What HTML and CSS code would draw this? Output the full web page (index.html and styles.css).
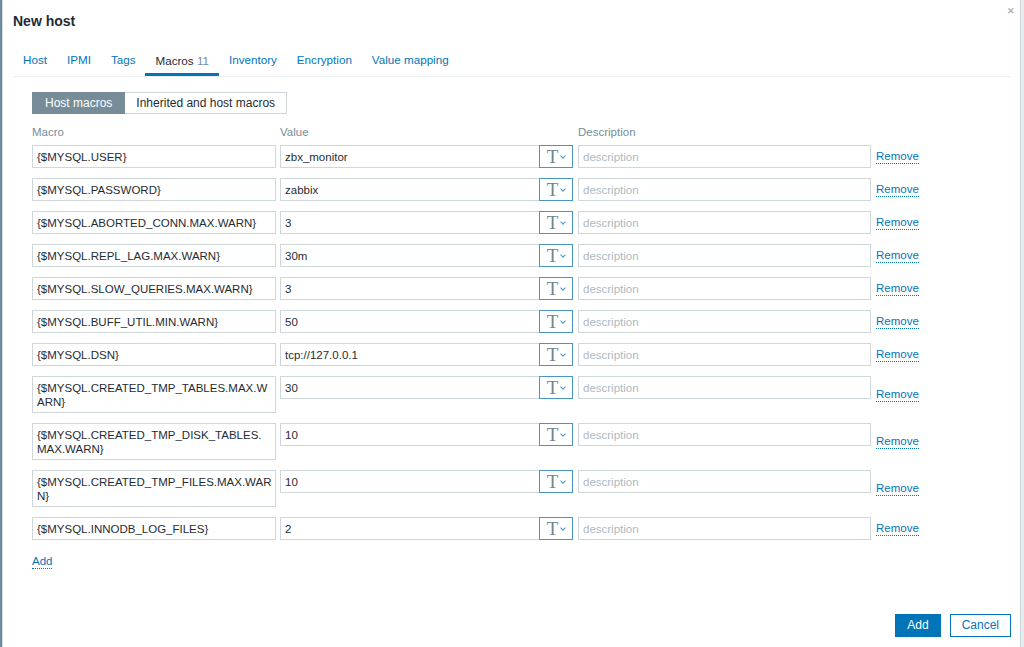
FILE: index.html
```html
<!DOCTYPE html>
<html>
<head>
<meta charset="utf-8">
<link rel="stylesheet" href="styles.css">
</head>
<body>
<div class="backdrop-left"></div>
<div class="dialog">
  <div class="head">
    <h4 class="title">New host</h4>
    <span class="close">&#x2715;</span>
  </div>
  <ul class="tabs">
    <li class="tab"><a>Host</a></li>
    <li class="tab"><a>IPMI</a></li>
    <li class="tab"><a>Tags</a></li>
    <li class="tab active"><a>Macros <span class="count">11</span></a></li>
    <li class="tab"><a>Inventory</a></li>
    <li class="tab"><a>Encryption</a></li>
    <li class="tab"><a>Value mapping</a></li>
  </ul>
  <div class="content">
    <div class="segmented">
      <span class="seg on">Host macros</span><span class="seg">Inherited and host macros</span>
    </div>
    <div class="grid">
      <div class="th">Macro</div><div class="th">Value</div><div class="th">Description</div><div class="th"></div>

      <div class="field macro">{$MYSQL.USER}</div>
      <div class="val"><div class="field vinput">zbx_monitor</div><span class="tbtn"><span class="t">T</span><span class="chev"></span></span></div>
      <div class="field desc">description</div>
      <a class="remove">Remove</a>

      <div class="field macro">{$MYSQL.PASSWORD}</div>
      <div class="val"><div class="field vinput">zabbix</div><span class="tbtn"><span class="t">T</span><span class="chev"></span></span></div>
      <div class="field desc">description</div>
      <a class="remove">Remove</a>

      <div class="field macro">{$MYSQL.ABORTED_CONN.MAX.WARN}</div>
      <div class="val"><div class="field vinput">3</div><span class="tbtn"><span class="t">T</span><span class="chev"></span></span></div>
      <div class="field desc">description</div>
      <a class="remove">Remove</a>

      <div class="field macro">{$MYSQL.REPL_LAG.MAX.WARN}</div>
      <div class="val"><div class="field vinput">30m</div><span class="tbtn"><span class="t">T</span><span class="chev"></span></span></div>
      <div class="field desc">description</div>
      <a class="remove">Remove</a>

      <div class="field macro">{$MYSQL.SLOW_QUERIES.MAX.WARN}</div>
      <div class="val"><div class="field vinput">3</div><span class="tbtn"><span class="t">T</span><span class="chev"></span></span></div>
      <div class="field desc">description</div>
      <a class="remove">Remove</a>

      <div class="field macro">{$MYSQL.BUFF_UTIL.MIN.WARN}</div>
      <div class="val"><div class="field vinput">50</div><span class="tbtn"><span class="t">T</span><span class="chev"></span></span></div>
      <div class="field desc">description</div>
      <a class="remove">Remove</a>

      <div class="field macro">{$MYSQL.DSN}</div>
      <div class="val"><div class="field vinput">tcp://127.0.0.1</div><span class="tbtn"><span class="t">T</span><span class="chev"></span></span></div>
      <div class="field desc">description</div>
      <a class="remove">Remove</a>

      <div class="field macro tall">{$MYSQL.CREATED_TMP_TABLES.MAX.W<br>ARN}</div>
      <div class="val"><div class="field vinput">30</div><span class="tbtn"><span class="t">T</span><span class="chev"></span></span></div>
      <div class="field desc">description</div>
      <a class="remove">Remove</a>

      <div class="field macro tall">{$MYSQL.CREATED_TMP_DISK_TABLES.<br>MAX.WARN}</div>
      <div class="val"><div class="field vinput">10</div><span class="tbtn"><span class="t">T</span><span class="chev"></span></span></div>
      <div class="field desc">description</div>
      <a class="remove">Remove</a>

      <div class="field macro tall">{$MYSQL.CREATED_TMP_FILES.MAX.WAR<br>N}</div>
      <div class="val"><div class="field vinput">10</div><span class="tbtn"><span class="t">T</span><span class="chev"></span></span></div>
      <div class="field desc">description</div>
      <a class="remove">Remove</a>

      <div class="field macro">{$MYSQL.INNODB_LOG_FILES}</div>
      <div class="val"><div class="field vinput">2</div><span class="tbtn"><span class="t">T</span><span class="chev"></span></span></div>
      <div class="field desc">description</div>
      <a class="remove">Remove</a>
    </div>
    <a class="addlink">Add</a>
  </div>
  <div class="footer">
    <span class="btn primary">Add</span>
    <span class="btn secondary">Cancel</span>
  </div>
</div>
<div class="backdrop-right"></div>
</body>
</html>
```

FILE: styles.css
```css
html, body {
  margin: 0;
  padding: 0;
}
body {
  width: 1024px;
  height: 647px;
  overflow: hidden;
  display: flex;
  font-family: "Liberation Sans", Arial, sans-serif;
  font-size: 11.5px;
  color: #1f2c33;
  background: #eef2f4;
}
.backdrop-left {
  width: 2px;
  flex: none;
  background: #6d8ba0;
}
.backdrop-right {
  flex: 1;
  background: #e6ebee;
  border-left: 1px solid #cfd6da;
}
.dialog {
  width: 1018px;
  height: 647px;
  flex: none;
  box-sizing: border-box;
  background: #ffffff;
  border-left: 1px solid #d7dde0;
  display: flex;
  flex-direction: column;
  position: relative;
}
.head {
  height: 42px;
  padding: 13px 10px 0 10px;
  box-sizing: border-box;
}
.title {
  margin: 0;
  font-size: 14px;
  line-height: 16px;
  font-weight: bold;
  color: #1f2c33;
}
.close {
  position: absolute;
  right: 5px;
  top: 6px;
  font-size: 9px;
  line-height: 10px;
  color: #a7b4bb;
  font-weight: bold;
}
.tabs {
  list-style: none;
  margin: 0 9px 0 10px;
  padding: 0;
  display: flex;
  height: 34px;
  border-bottom: 1px solid #ebeef0;
  font-size: 11.65px;
}
.tab {
  padding: 0 10px;
  line-height: 35px;
  height: 34px;
  box-sizing: border-box;
}
.tab a {
  color: #0275b8;
}
.tab.active {
  border-bottom: 3px solid #0275b8;
  line-height: 37px;
}
.tab.active a {
  color: #1f2c33;
}
.count {
  color: #768d99;
}
.content {
  flex: 1;
  padding: 15px 0 0 29px;
}
.segmented {
  display: flex;
  height: 22px;
}
.seg {
  height: 22px;
  box-sizing: border-box;
  line-height: 20px;
  padding: 0 11px;
  border: 1px solid #cfd7da;
  color: #1f2c33;
  font-size: 12px;
}
.seg.on {
  background: #768d99;
  border-color: #768d99;
  color: #ffffff;
  padding: 0 12px;
}
.seg + .seg {
  border-left: none;
}
.grid {
  display: grid;
  grid-template-columns: 244px 294px 293px auto;
  column-gap: 4px;
  row-gap: 10px;
  margin-top: 11px;
  align-items: start;
}
.th {
  color: #768d99;
  line-height: 14px;
  height: 14px;
  margin-bottom: -4px;
}
.field {
  box-sizing: border-box;
  border: 1px solid #cfd7da;
  background: #ffffff;
  padding: 4px 4px 3px 4px;
  line-height: 14px;
  min-height: 23px;
  color: #1f2c33;
}
.macro {
  width: 244px;
}
.val {
  display: flex;
  width: 294px;
}
.vinput {
  width: 260px;
  height: 23px;
}
.tbtn {
  width: 34px;
  height: 23px;
  box-sizing: border-box;
  border: 1px solid #4796c4;
  display: flex;
  align-items: center;
  justify-content: center;
  gap: 3px;
  margin-left: -1px;
}
.t {
  font-family: "Liberation Serif", "Times New Roman", serif;
  font-size: 19px;
  line-height: 18px;
  color: #6f858f;
  margin-top: 1px;
}
.chev {
  width: 3px;
  height: 3px;
  border-right: 1px solid #4796c4;
  border-bottom: 1px solid #4796c4;
  transform: rotate(45deg);
  margin-top: -2px;
}
.desc {
  width: 293px;
  height: 23px;
  color: #acbbc2;
}
.remove {
  align-self: center;
  justify-self: start;
  color: #0275b8;
  border-bottom: 1px dotted #0275b8;
  line-height: 14px;
  margin-left: 1px;
}
.addlink {
  display: inline-block;
  margin-top: 15px;
  color: #0275b8;
  border-bottom: 1px dotted #0275b8;
  line-height: 13px;
}
.footer {
  display: flex;
  justify-content: flex-end;
  gap: 9px;
  padding: 0 9px 10px 0;
}
.btn {
  height: 23px;
  box-sizing: border-box;
  line-height: 21px;
  padding: 0 11px;
  border: 1px solid #0275b8;
  font-size: 12px;
}
.primary {
  background: #0275b8;
  color: #ffffff;
  padding: 0 11px;
}
.secondary {
  background: #ffffff;
  color: #0275b8;
  padding: 0 11px;
}
```
